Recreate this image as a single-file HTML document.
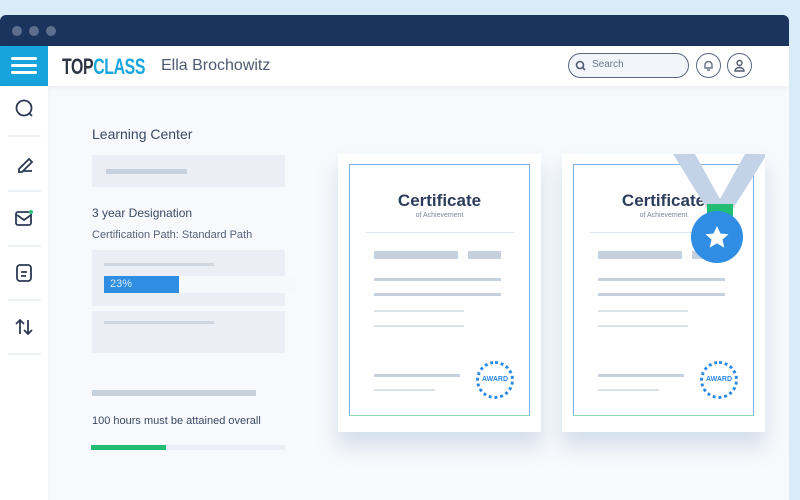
<!DOCTYPE html>
<html><head><style>
*{margin:0;padding:0;box-sizing:border-box}
body{width:800px;height:500px;overflow:hidden;background:#d9ebf7;font-family:"Liberation Sans",sans-serif;position:relative}
.a{position:absolute}
.bar{position:absolute;background:#c7d1de}
</style></head><body>
<div class="a" style="left:0;top:15px;width:789px;height:485px;background:#f7f9fc;border-radius:6px 6px 0 0;overflow:hidden">
 <div class="a" style="left:0;top:0;width:789px;height:31px;background:#1b345e"></div>
 <div class="a" style="left:12px;top:11px;width:10px;height:10px;border-radius:50%;background:#5d6f8c"></div>
 <div class="a" style="left:29px;top:11px;width:10px;height:10px;border-radius:50%;background:#5d6f8c"></div>
 <div class="a" style="left:46px;top:11px;width:10px;height:10px;border-radius:50%;background:#5d6f8c"></div>
 <div class="a" style="left:0;top:31px;width:789px;height:40px;background:#fff;box-shadow:0 2px 6px rgba(0,0,0,.05)"></div>
 <div class="a" style="left:0;top:31px;width:48px;height:40px;background:#17a3dc"></div>
 <div class="a" style="left:11px;top:42px;width:26px;height:3px;background:#fff;border-radius:2px"></div>
 <div class="a" style="left:11px;top:49px;width:26px;height:3px;background:#fff;border-radius:2px"></div>
 <div class="a" style="left:11px;top:56px;width:26px;height:3px;background:#fff;border-radius:2px"></div>
 <div class="a" style="left:62px;top:39px;font-size:22px;font-weight:bold;letter-spacing:-0.5px;transform:scaleX(.72);transform-origin:left;white-space:nowrap"><span style="color:#2f3644">TOP</span><span style="color:#19a6df">CLASS</span></div>
 <div class="a" style="left:161px;top:42px;font-size:16px;color:#4d5a70">Ella Brochowitz</div>
 <div class="a" style="left:568px;top:38px;width:121px;height:25px;border:1.5px solid #5b6780;border-radius:13px;background:#f2f5fa"></div>
 <svg class="a" style="left:575px;top:45px" width="12" height="12"><circle cx="5" cy="5" r="3.5" fill="none" stroke="#4e5b74" stroke-width="1.6"/><path d="M7.5 7.5L10 10" stroke="#4e5b74" stroke-width="1.6"/></svg>
 <div class="a" style="left:592px;top:44px;font-size:10px;color:#6b778c">Search</div>
 <div class="a" style="left:696px;top:38px;width:25px;height:25px;border:1.5px solid #5b6780;border-radius:50%"></div>
 <svg class="a" style="left:702px;top:44px" width="13" height="13"><path d="M3 9V6a3.5 3.5 0 017 0v3zM5 11h3" fill="none" stroke="#6b778c" stroke-width="1.5"/></svg>
 <div class="a" style="left:727px;top:38px;width:25px;height:25px;border:1.5px solid #5b6780;border-radius:50%"></div>
 <svg class="a" style="left:733px;top:44px" width="13" height="13"><circle cx="6.5" cy="4" r="2.5" fill="none" stroke="#4e5b74" stroke-width="1.4"/><path d="M2 12a4.5 3.5 0 019 0z" fill="none" stroke="#4e5b74" stroke-width="1.4"/></svg>
 <div class="a" style="left:0;top:71px;width:48px;height:414px;background:#fff;box-shadow:1px 0 3px rgba(0,0,0,.04)"></div>
 <div class="a" style="left:92px;top:126px;font-size:14px;color:#3b4a66;top:126px"></div>
</div>
<svg class="a" style="left:0;top:0" width="48" height="370" fill="none" stroke="#2c3a55" stroke-width="1.8">
  <circle cx="24" cy="108" r="7.5"/><path d="M29 113l3 3"/>
  <path d="M8 136h33M8 191h33M8 246h33M8 300h33M8 354h33" stroke="#dde3ea" stroke-width="1"/>
  <path d="M19 169l10-10 3 3-10 10h-3zM23 171h9" />
  <rect x="16" y="212" width="15" height="13" rx="2"/><path d="M17 215l7 5 7-5"/>
  <circle cx="31" cy="212" r="2" fill="#2ec27e" stroke="none"/>
  <rect x="17" y="265" width="14" height="16" rx="3"/><path d="M21 272h6M21 276h5"/>
  <path d="M20 334v-14m-4 4l4-4 4 4M28 320v14m-4-4l4 4 4-4"/>
</svg>
<div class="a" style="left:92px;top:126px;font-size:14px;color:#3b4a66">Learning Center</div>
<div class="a" style="left:92px;top:155px;width:193px;height:32px;background:#ebeff5"></div>
<div class="bar" style="left:106px;top:169px;width:81px;height:5px"></div>
<div class="a" style="left:92px;top:206px;font-size:12px;color:#3b4a66">3 year Designation</div>
<div class="a" style="left:92px;top:229px;font-size:11px;color:#56627a">Certification Path: Standard Path</div>
<div class="a" style="left:92px;top:250px;width:193px;height:56px;background:#ebeff5"></div>
<div class="bar" style="left:104px;top:263px;width:110px;height:3px;background:#cfd6e0"></div>
<div class="a" style="left:104px;top:276px;width:193px;height:17px;background:#f6f8fb"></div>
<div class="a" style="left:104px;top:276px;width:75px;height:17px;background:#2f8de4;color:#dbeafc;font-size:11px;padding:2px 6px">23%</div>
<div class="a" style="left:92px;top:311px;width:193px;height:42px;background:#ebeff5"></div>
<div class="bar" style="left:104px;top:321px;width:110px;height:3px;background:#cfd6e0"></div>
<div class="bar" style="left:92px;top:390px;width:164px;height:6px"></div>
<div class="a" style="left:92px;top:415px;font-size:11px;color:#3b4a66">100 hours must be attained overall</div>
<div class="a" style="left:91px;top:445px;width:194px;height:5px;background:#ebeff5"></div>
<div class="a" style="left:91px;top:445px;width:75px;height:5px;background:#22bd72"></div>
<!-- certs -->
<div class="a" style="left:338px;top:154px;width:203px;height:278px;background:#fff;box-shadow:0 14px 18px rgba(150,175,205,.35)"></div>
<div class="a" style="left:349px;top:164px;width:181px;height:252px;border:1.5px solid #7fb0ea;border-bottom-color:#8fd8b4"></div>
<div class="a" style="left:338px;top:191px;width:203px;text-align:center;font-size:17px;font-weight:bold;color:#2d3d5e">Certificate</div>
<div class="a" style="left:338px;top:212px;width:203px;text-align:center;font-size:7px;color:#7b879c">of Achievement</div>
<div class="bar" style="left:365px;top:232px;width:150px;height:1px;background:#e2e9f1"></div>
<div class="bar" style="left:374px;top:251px;width:84px;height:8px"></div>
<div class="bar" style="left:468px;top:251px;width:33px;height:8px"></div>
<div class="bar" style="left:374px;top:278px;width:127px;height:3px"></div>
<div class="bar" style="left:374px;top:293px;width:127px;height:3px"></div>
<div class="bar" style="left:374px;top:310px;width:90px;height:2px;background:#dbe2ea"></div>
<div class="bar" style="left:374px;top:325px;width:90px;height:2px;background:#dbe2ea"></div>
<div class="bar" style="left:374px;top:374px;width:86px;height:3px"></div>
<div class="bar" style="left:374px;top:389px;width:61px;height:2px;background:#dbe2ea"></div>
<div class="a" style="left:476px;top:361px;width:38px;height:38px;border-radius:50%;border:3px dotted #2c8ae6;background:#fff;font-size:7px;font-weight:bold;color:#2c8ae6;text-align:center;line-height:32px">AWARD</div>

<div class="a" style="left:562px;top:154px;width:203px;height:278px;background:#fff;box-shadow:0 14px 18px rgba(150,175,205,.35)"></div>
<div class="a" style="left:573px;top:164px;width:181px;height:252px;border:1.5px solid #7fb0ea;border-bottom-color:#8fd8b4"></div>
<div class="a" style="left:562px;top:191px;width:203px;text-align:center;font-size:17px;font-weight:bold;color:#2d3d5e">Certificate</div>
<div class="a" style="left:562px;top:212px;width:203px;text-align:center;font-size:7px;color:#7b879c">of Achievement</div>
<div class="bar" style="left:589px;top:232px;width:150px;height:1px;background:#e2e9f1"></div>
<div class="bar" style="left:598px;top:251px;width:84px;height:8px"></div>
<div class="bar" style="left:692px;top:251px;width:33px;height:8px"></div>
<div class="bar" style="left:598px;top:278px;width:127px;height:3px"></div>
<div class="bar" style="left:598px;top:293px;width:127px;height:3px"></div>
<div class="bar" style="left:598px;top:310px;width:90px;height:2px;background:#dbe2ea"></div>
<div class="bar" style="left:598px;top:325px;width:90px;height:2px;background:#dbe2ea"></div>
<div class="bar" style="left:598px;top:374px;width:86px;height:3px"></div>
<div class="bar" style="left:598px;top:389px;width:61px;height:2px;background:#dbe2ea"></div>
<div class="a" style="left:700px;top:361px;width:38px;height:38px;border-radius:50%;border:3px dotted #2c8ae6;background:#fff;font-size:7px;font-weight:bold;color:#2c8ae6;text-align:center;line-height:32px">AWARD</div>
<svg class="a" style="left:670px;top:154px" width="95" height="110">
 <path d="M3 0h22l25 45 25-45h22l-36 58h-22z" fill="#c3d2e6"/>
 <rect x="37" y="50" width="26" height="14" fill="#22bd72"/>
 <circle cx="47" cy="83" r="26" fill="#2f8de4"/>
 <path d="M47 72l3.5 7.5 8 .8-6 5.3 1.8 8-7.3-4.2-7.3 4.2 1.8-8-6-5.3 8-.8z" fill="#fff"/>
</svg>
</body></html>
